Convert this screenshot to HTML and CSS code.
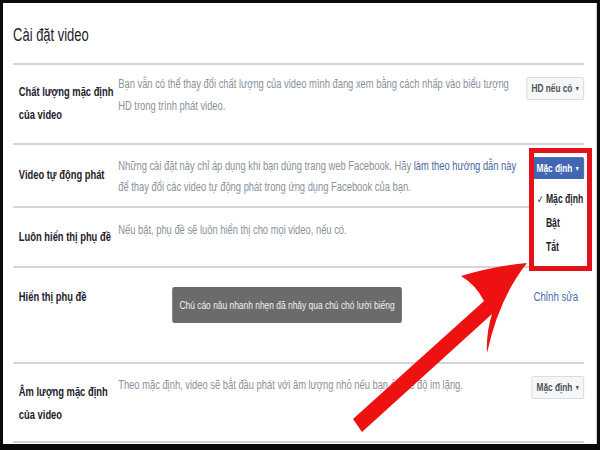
FILE: index.html
```html
<!DOCTYPE html>
<html lang="vi">
<head>
<meta charset="utf-8">
<title>Cài đặt video</title>
<link rel="stylesheet" href="styles.css">
</head>
<body>
<div class="panel">
  <div class="sheet">
    <h1 class="title">Cài đặt video</h1>

    <div class="row row-1">
      <div class="label">Chất lượng mặc định<br>của video</div>
      <div class="desc">Bạn vẫn có thể thay đổi chất lượng của video mình đang xem bằng cách nhấp vào biểu tượng<br>HD trong trình phát video.</div>
      <div class="action"><span class="btn">HD nếu có <span class="caret">▼</span></span></div>
    </div>

    <div class="row row-2">
      <div class="label">Video tự động phát</div>
      <div class="desc">Những cài đặt này chỉ áp dụng khi bạn dùng trang web Facebook. Hãy <span class="link">làm theo hướng dẫn này</span><br>để thay đổi các video tự động phát trong ứng dụng Facebook của bạn.</div>
      <div class="action"><span class="btn btn-blue">Mặc định <span class="caret">▼</span></span></div>
    </div>

    <div class="row row-3">
      <div class="label">Luôn hiển thị phụ đề</div>
      <div class="desc">Nếu bật, phụ đề sẽ luôn hiển thị cho mọi video, nếu có.</div>
    </div>

    <div class="row row-4">
      <div class="label">Hiển thị phụ đề</div>
      <div class="desc"><div class="caption">Chú cáo nâu nhanh nhẹn đã nhảy qua chú chó lười biếng</div></div>
      <div class="action"><span class="edit">Chỉnh sửa</span></div>
    </div>

    <div class="row row-5">
      <div class="label">Âm lượng mặc định<br>của video</div>
      <div class="desc">Theo mặc định, video sẽ bắt đầu phát với âm lượng nhỏ nếu bạn ở chế độ im lặng.</div>
      <div class="action"><span class="btn">Mặc định <span class="caret">▼</span></span></div>
    </div>

    <div class="menu">
      <div class="menu-item checked"><span class="check">✓</span>Mặc định</div>
      <div class="menu-item">Bật</div>
      <div class="menu-item">Tắt</div>
    </div>
  </div>
</div>

<div class="redbox"></div>
<svg class="arrow" width="600" height="450" viewBox="0 0 600 450">
  <path d="M527 263 Q494 266 461 276 Q476 285 484 301 L353 419 L362 432 L492 314 Q486 333 487 353 Q499 298 527 263 Z" fill="#ee1111"/>
</svg>
</body>
</html>
```
FILE: styles.css
```css
* { box-sizing: border-box; }
html, body { margin: 0; padding: 0; }
body {
  width: 600px;
  height: 450px;
  background: #0b0b0b;
  padding: 3px 3px 6px 3px;
  position: relative;
  overflow: hidden;
  font-family: "Liberation Sans", Arial, sans-serif;
}
.panel {
  position: relative;
  background: #fff;
  height: 441px;
  overflow: hidden;
  border-right: 1px solid #d6d6d6;
}
/* the screenshot is horizontally compressed: lay out wide, then squeeze */
.sheet {
  position: relative;
  width: 825px;
  height: 441px;
  padding: 0 18px 0 14px;
  transform: scaleX(0.72);
  transform-origin: 0 0;
}
.title {
  margin: 0;
  height: 62px;
  padding-top: 22px;
  font-size: 18px;
  line-height: 20px;
  font-weight: normal;
  color: #1d2129;
  border-bottom: 2px solid #d3d5d8;
}
.row {
  display: flex;
  border-bottom: 2px solid #d3d5d8;
}
.row-1 { height: 80px; }
.row-2 { height: 63px; }
.row-3 { height: 60px; }
.row-4 { height: 96px; }
.row-5 { height: 79px; }
.label {
  width: 146px;
  flex: none;
  padding-left: 8px;
  font-size: 13px;
  font-weight: bold;
  color: #1d2129;
  line-height: 23px;
  white-space: nowrap;
}
.desc {
  flex: 1;
  font-size: 13px;
  color: #8a919b;
  line-height: 22px;
  white-space: nowrap;
}
.action {
  display: flex;
  justify-content: flex-end;
  align-items: flex-start;
}
.row-1 .label { padding-top: 15px; }
.row-1 .desc { padding-top: 8px; }
.row-1 .action { padding-top: 12px; }
.row-2 .label { padding-top: 19px; line-height: 22px; }
.row-2 .desc { padding-top: 10px; line-height: 21px; }
.row-2 .action { padding-top: 12px; }
.row-3 .label { padding-top: 18px; line-height: 22px; }
.row-3 .desc { padding-top: 11px; }
.row-4 .label { padding-top: 18px; line-height: 22px; }
.row-4 .desc { padding-top: 19px; }
.row-4 .action { padding-top: 18px; padding-right: 8px; }
.row-5 .label { padding-top: 16px; }
.row-5 .desc { padding-top: 10px; }
.row-5 .action { padding-top: 12px; }
.link { color: #4b67a1; }
.btn {
  display: inline-block;
  height: 23px;
  line-height: 21px;
  padding: 0 5px 0 6px;
  font-size: 11.5px;
  font-weight: bold;
  color: #4b4f56;
  background: #f5f6f7;
  border: 1px solid #d3d6db;
  border-radius: 2px;
  white-space: nowrap;
}
.btn-blue {
  background: #4267b2;
  border-color: #4267b2;
  color: #fff;
}
.caret { font-size: 7px; vertical-align: 1px; }
.caption {
  display: inline-block;
  margin-left: 75px;
  width: 319px;
  height: 36px;
  line-height: 36px;
  text-align: center;
  background: #6b6b6b;
  border-radius: 3px;
  color: #f2f2f2;
  font-size: 11.7px;
}
.edit {
  font-size: 13.5px;
  line-height: 22px;
  color: #4a6cb0;
}
.menu {
  position: absolute;
  left: 736px;
  top: 176px;
  width: 75px;
  height: 87px;
  background: #fff;
  padding-top: 8px;
}
.menu-item {
  height: 24px;
  line-height: 24px;
  font-size: 12px;
  font-weight: bold;
  color: #1d2129;
  padding-left: 18px;
}
.menu-item.checked { padding-left: 5px; }
.check { display: inline-block; width: 13px; font-size: 11px; font-weight: normal; }
.redbox {
  position: absolute;
  left: 529px;
  top: 148px;
  width: 63px;
  height: 123px;
  border: 5px solid #e5121b;
}
.arrow {
  position: absolute;
  left: 0;
  top: 0;
  pointer-events: none;
}
```
